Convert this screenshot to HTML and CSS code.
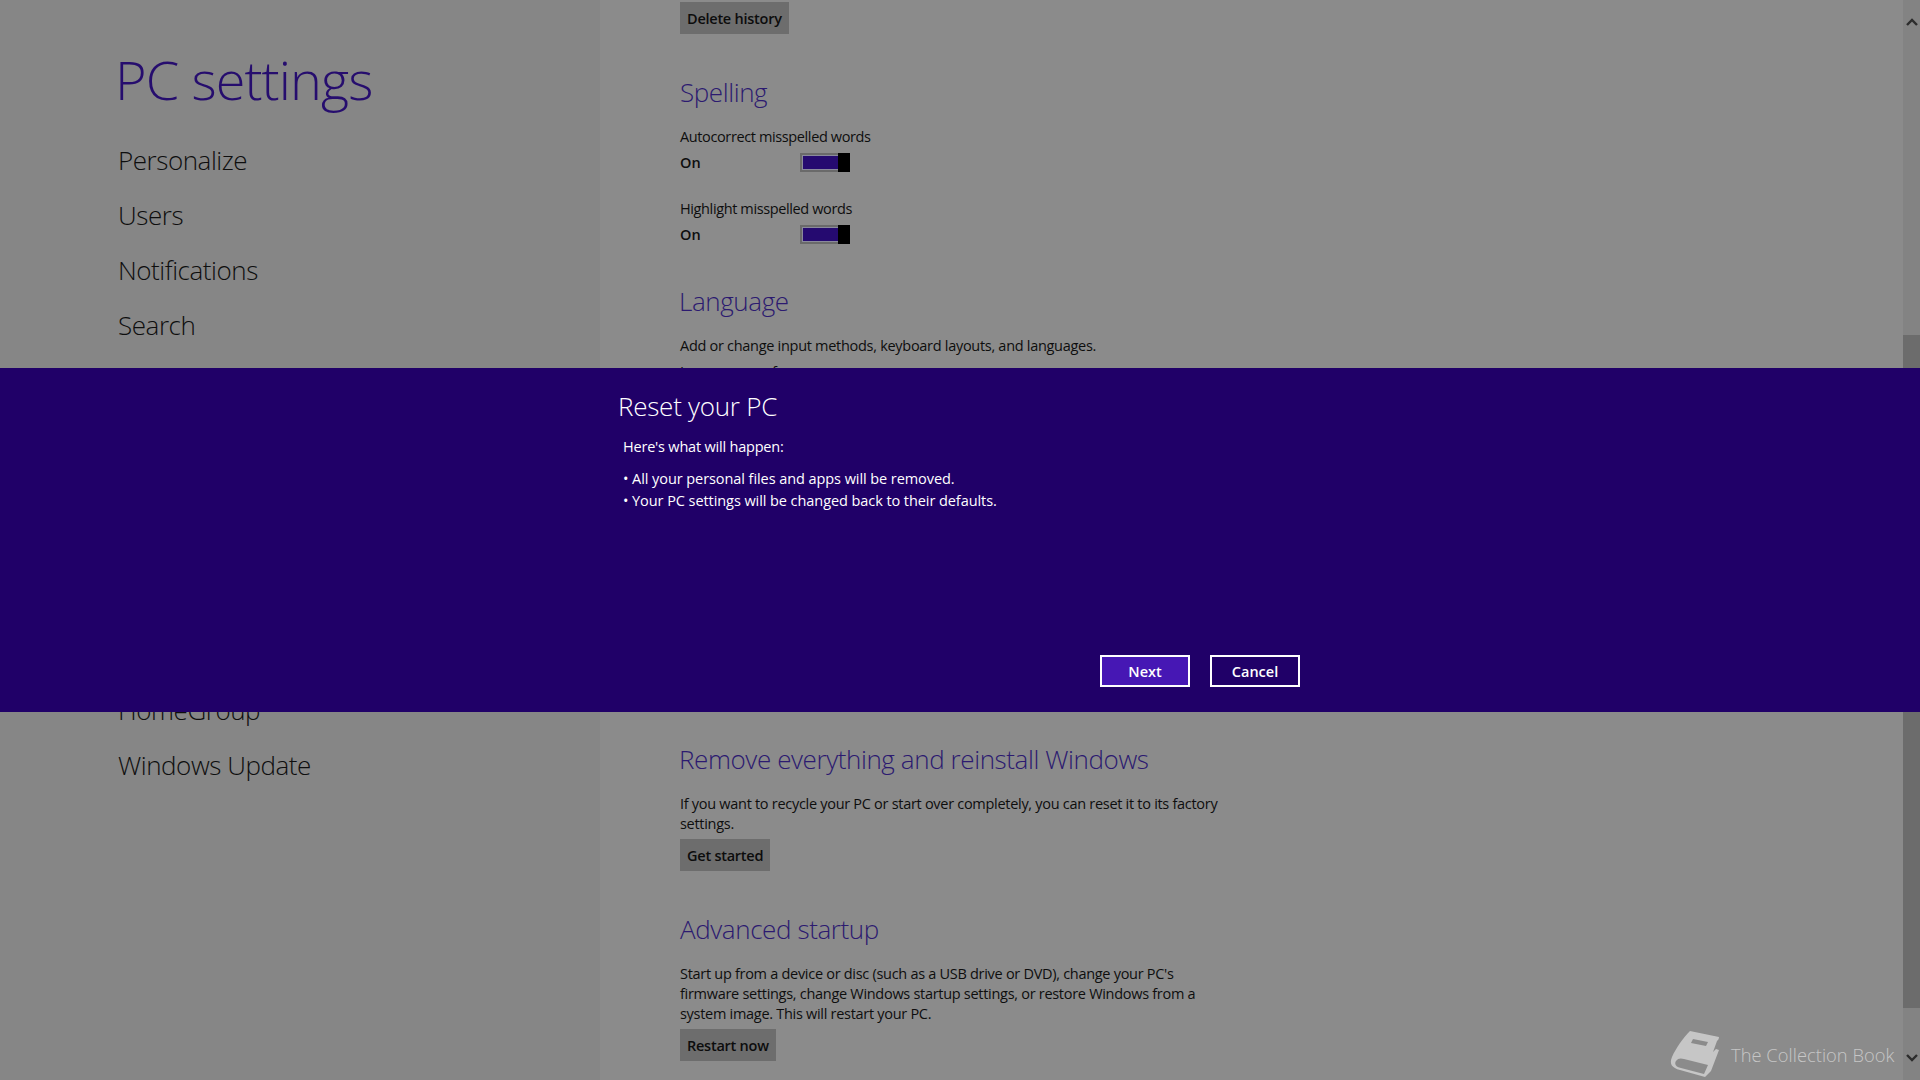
FILE: index.html
```html
<!DOCTYPE html>
<html lang="en">
<head>
    <meta charset="UTF-8">
    <title>PC settings</title>
    <link rel="stylesheet" href="styles.css">
</head>
<body>
    <div class="settings">
        <div class="sidebar">
            <h1 class="pageTitle">PC settings</h1>
            <ul class="navList">
                <li>Personalize</li>
                <li>Users</li>
                <li>Notifications</li>
                <li>Search</li>
                <li>Share</li>
                <li>General</li>
                <li>Privacy</li>
                <li>Devices</li>
                <li>Ease of Access</li>
                <li>Sync your settings</li>
                <li>HomeGroup</li>
                <li>Windows Update</li>
            </ul>
        </div>
        <div class="content">
            <button class="grayBtn firstBtn">Delete history</button>

            <h2 class="spellingHead">Spelling</h2>
            <div class="setting">
                <div class="settingLabel">Autocorrect misspelled words</div>
                <div class="toggleRow">
                    <span class="toggleState">On</span>
                    <span class="toggle"><span class="toggleFill"></span><span class="toggleKnob"></span></span>
                </div>
            </div>
            <div class="setting">
                <div class="settingLabel">Highlight misspelled words</div>
                <div class="toggleRow">
                    <span class="toggleState">On</span>
                    <span class="toggle"><span class="toggleFill"></span><span class="toggleKnob"></span></span>
                </div>
            </div>

            <h2 class="languageHead">Language</h2>
            <p class="desc">Add or change input methods, keyboard layouts, and languages.</p>
            <div class="behindDialog">Language preferences</div>

            <h2 class="removeHead">Remove everything and reinstall Windows</h2>
            <p class="desc wide">If you want to recycle your PC or start over completely, you can reset it to its factory settings.</p>
            <button class="grayBtn">Get started</button>

            <h2 class="advancedHead">Advanced startup</h2>
            <p class="desc wide">Start up from a device or disc (such as a USB drive or DVD), change your PC's firmware settings, change Windows startup settings, or restore Windows from a system image. This will restart your PC.</p>
            <button class="grayBtn">Restart now</button>
        </div>
        <div class="scrollbar">
            <svg class="arrow" width="12" height="8" viewBox="0 0 12 8"><path d="M1 7 L6 2 L11 7" fill="none" stroke="#2c2c2c" stroke-width="2.4"/></svg>
            <div class="scrollSpace"><div class="scrollThumb"></div></div>
            <svg class="arrow" width="12" height="8" viewBox="0 0 12 8"><path d="M1 1 L6 6 L11 1" fill="none" stroke="#2c2c2c" stroke-width="2.4"/></svg>
        </div>
    </div>

    <div class="dialog">
        <div class="dialogInner">
            <h2 class="dialogTitle">Reset your PC</h2>
            <p class="dialogIntro">Here's what will happen:</p>
            <p class="dialogLine">&bull; All your personal files and apps will be removed.</p>
            <p class="dialogLine">&bull; Your PC settings will be changed back to their defaults.</p>
            <div class="dialogButtons">
                <button class="dialogBtn primary">Next</button>
                <button class="dialogBtn">Cancel</button>
            </div>
        </div>
    </div>

    <div class="watermark">
        <svg width="52" height="48" viewBox="0 0 52 48">
            <path fill="#c6c6c6" d="M21 1 L50 7 C50 9 49 10 48 11 L44 22 L47 19 L50 20 L42 41 L36 47 L11 40 C3 38 0 34 3 27 C7 18 14 8 21 1 Z"/>
            <path fill="#8b8b8b" d="M7 31 C9 28 12 28 15 29 L39 35 L35 44 L12 38 C7 37 5 34 7 31 Z"/>
            <path fill="#8b8b8b" d="M24 9 L39 12 L37 16 L22 13 Z"/>
        </svg>
        <span class="watermarkText">The Collection Book</span>
    </div>
</body>
</html>
```

FILE: styles.css
```css
* {
    box-sizing: border-box;
}
html, body {
    margin: 0;
    height: 100%;
    overflow: hidden;
}
body {
    position: relative;
    background-color: #8b8b8b;
    color: #0e0e0e;
    font-family: 'Open Sans', 'Noto Sans', sans-serif;
}
h1, h2, p, ul {
    margin: 0;
    padding: 0;
    font-weight: 300;
}
.settings {
    display: flex;
    height: 1080px;
}

/* left column */
.sidebar {
    width: 600px;
    height: 100%;
    padding: 41px 0 0 115px;
    background-color: #868686;
    flex-shrink: 0;
}
.pageTitle {
    font-size: 54px;
    line-height: 76px;
    letter-spacing: -0.9px;
    color: #260d6e;
}
.navList {
    list-style-type: none;
    margin-top: 16px;
    padding-left: 3px;
}
.navList li {
    height: 55px;
    line-height: 55px;
    font-size: 26px;
    font-weight: 300;
    letter-spacing: -0.45px;
}

/* right column */
.content {
    flex: 1;
    padding: 2px 0 0 80px;
}
.grayBtn {
    display: block;
    height: 32px;
    padding: 0 7px;
    background-color: #6d6d6d;
    color: #0c0c0c;
    border: none;
    font-family: inherit;
    font-size: 14.5px;
    font-weight: 600;
    letter-spacing: -0.25px;
}
h2 {
    font-size: 26px;
    line-height: 34px;
    color: #2c1a70;
    letter-spacing: -0.4px;
}
.spellingHead {
    margin-top: 41px;
}
.setting {
    margin-bottom: 27px;
}
.settingLabel {
    font-size: 14.5px;
    line-height: 20px;
    font-weight: 400;
    letter-spacing: -0.38px;
    margin-top: 18px;
}
.setting + .setting .settingLabel {
    margin-top: 0;
}
.toggleRow {
    display: flex;
    align-items: center;
    height: 19px;
    margin-top: 6px;
}
.toggleState {
    width: 120px;
    font-size: 14.5px;
    font-weight: 600;
}
.toggle {
    display: flex;
    width: 50px;
    height: 19px;
    border: 2px solid #6a6a6a;
    border-right: none;
    padding: 0;
}
.toggleFill {
    flex: 1;
    background-color: #250a70;
    border: 1px solid #8a8a9c;
    border-right: none;
}
.toggleKnob {
    width: 12px;
    margin: -2px 0;
    background-color: #000;
}
.languageHead {
    margin-top: 40px;
    margin-left: -1px;
}
.desc {
    font-size: 14.5px;
    font-weight: 400;
    line-height: 20px;
    letter-spacing: -0.29px;
    margin-top: 18px;
}
.wide {
    width: 550px;
    margin-bottom: 5px;
}
.behindDialog {
    height: 386px;
    padding-top: 6px;
    font-size: 14.5px;
}
.removeHead {
    margin-top: 0;
    margin-left: -1px;
}
.advancedHead {
    margin-top: 41px;
}

/* scrollbar */
.scrollbar {
    width: 17px;
    height: 100%;
    background-color: #838383;
    display: flex;
    flex-direction: column;
    align-items: center;
    padding: 18px 0 18px;
    flex-shrink: 0;
}
.scrollSpace {
    flex: 1;
    width: 100%;
    padding-top: 309px;
}
.scrollThumb {
    height: 673px;
    background-color: #6c6c6c;
}

/* dialog band lies over the page */
.dialog {
    position: absolute;
    top: 368px;
    left: 0;
    right: 0;
    height: 344px;
    background-color: #200068;
    color: #fff;
}
.dialogInner {
    width: 700px;
    margin-left: 618px;
    padding-top: 18px;
}
.dialogTitle {
    font-size: 26px;
    line-height: 40px;
    font-weight: 300;
    color: #fff;
    letter-spacing: -0.25px;
}
.dialogIntro {
    font-size: 14.5px;
    font-weight: 400;
    line-height: 22px;
    margin: 10px 0 10px 5px;
    letter-spacing: -0.2px;
}
.dialogLine {
    font-size: 14.5px;
    font-weight: 400;
    line-height: 22px;
    margin-left: 5px;
    letter-spacing: -0.07px;
}
.dialogButtons {
    display: flex;
    gap: 20px;
    margin-top: 143px;
    margin-left: 482px;
}
.dialogBtn {
    width: 90px;
    height: 32px;
    background-color: #200068;
    border: 2px solid #fff;
    color: #fff;
    font-family: inherit;
    font-size: 14.5px;
    font-weight: 600;
}
.dialogBtn.primary {
    background-color: #4617b4;
}

.watermark {
    position: absolute;
    left: 1669px;
    top: 1030px;
    display: flex;
    align-items: center;
    gap: 10px;
    height: 48px;
}
.watermarkText {
    font-size: 18.3px;
    font-weight: 300;
    color: #c6c6c6;
    letter-spacing: 0.05px;
}
```
